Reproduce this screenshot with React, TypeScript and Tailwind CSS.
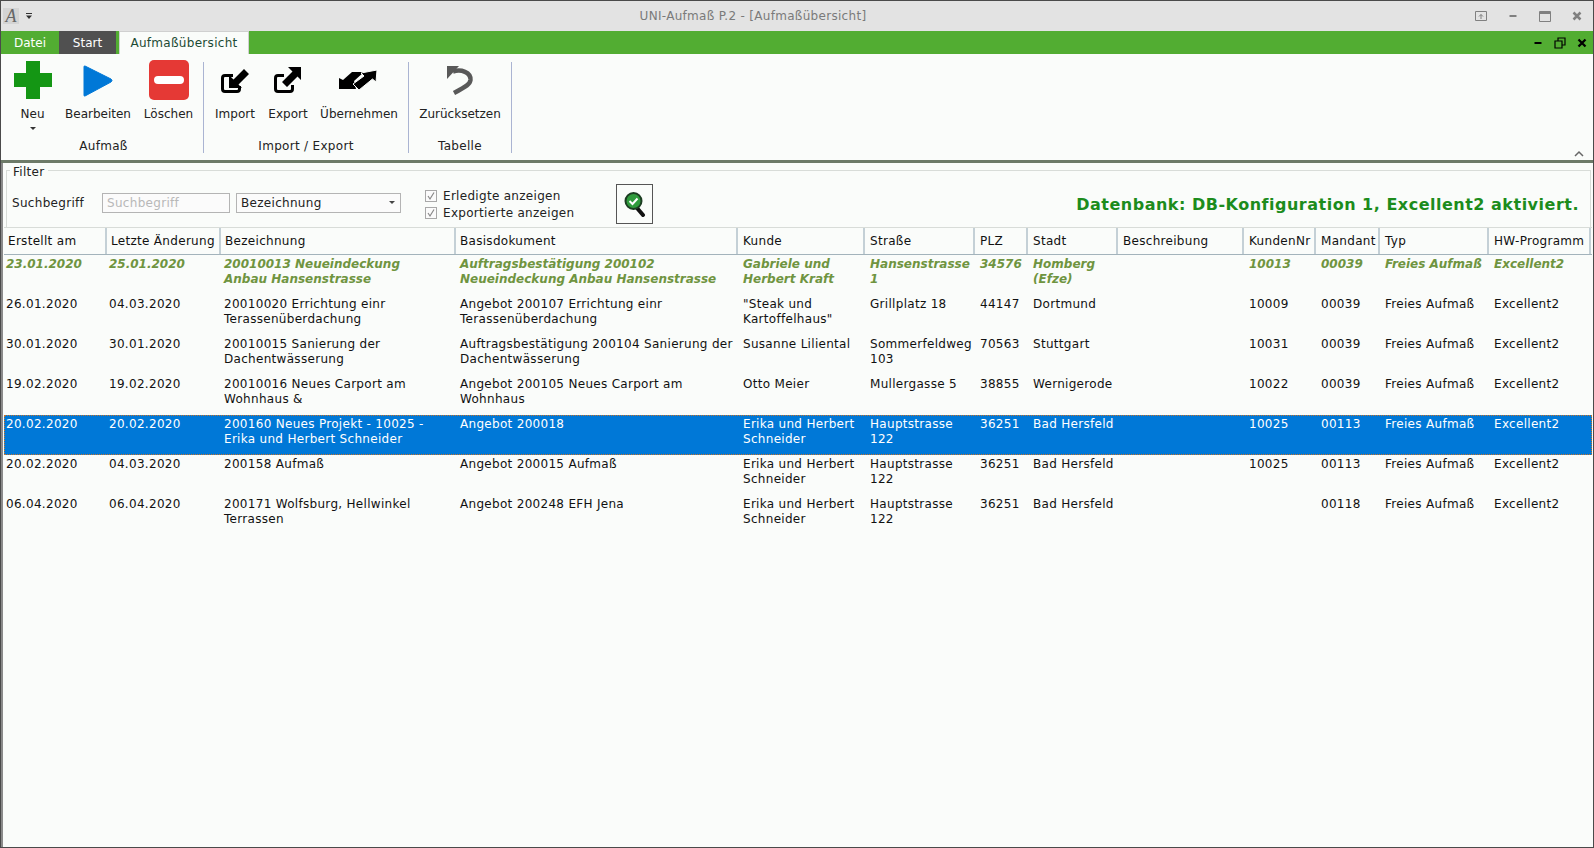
import React from 'react';

const colsClass =
  'grid w-[1588px] grid-cols-[103px_114px_235px_282px_127px_110px_53px_90px_126px_72px_64px_109px_102px]';

type Row = { cells: string[]; kind?: 'done' | 'selected' };

const headers = [
  'Erstellt am',
  'Letzte Änderung',
  'Bezeichnung',
  'Basisdokument',
  'Kunde',
  'Straße',
  'PLZ',
  'Stadt',
  'Beschreibung',
  'KundenNr',
  'Mandant',
  'Typ',
  'HW-Programm',
];

const rows: Row[] = [
  {
    kind: 'done',
    cells: [
      '23.01.2020',
      '25.01.2020',
      '20010013 Neueindeckung\nAnbau Hansenstrasse',
      'Auftragsbestätigung 200102\nNeueindeckung Anbau Hansenstrasse',
      'Gabriele und\nHerbert Kraft',
      'Hansenstrasse\n1',
      '34576',
      'Homberg\n(Efze)',
      '',
      '10013',
      '00039',
      'Freies Aufmaß',
      'Excellent2',
    ],
  },
  {
    cells: [
      '26.01.2020',
      '04.03.2020',
      '20010020 Errichtung einr\nTerassenüberdachung',
      'Angebot 200107 Errichtung einr\nTerassenüberdachung',
      '"Steak und\nKartoffelhaus"',
      'Grillplatz 18',
      '44147',
      'Dortmund',
      '',
      '10009',
      '00039',
      'Freies Aufmaß',
      'Excellent2',
    ],
  },
  {
    cells: [
      '30.01.2020',
      '30.01.2020',
      '20010015 Sanierung der\nDachentwässerung',
      'Auftragsbestätigung 200104 Sanierung der\nDachentwässerung',
      'Susanne Liliental',
      'Sommerfeldweg\n103',
      '70563',
      'Stuttgart',
      '',
      '10031',
      '00039',
      'Freies Aufmaß',
      'Excellent2',
    ],
  },
  {
    cells: [
      '19.02.2020',
      '19.02.2020',
      '20010016 Neues Carport am\nWohnhaus &',
      'Angebot 200105 Neues Carport am\nWohnhaus',
      'Otto Meier',
      'Mullergasse 5',
      '38855',
      'Wernigerode',
      '',
      '10022',
      '00039',
      'Freies Aufmaß',
      'Excellent2',
    ],
  },
  {
    kind: 'selected',
    cells: [
      '20.02.2020',
      '20.02.2020',
      '200160 Neues Projekt - 10025 -\nErika und Herbert Schneider',
      'Angebot 200018',
      'Erika und Herbert\nSchneider',
      'Hauptstrasse\n122',
      '36251',
      'Bad Hersfeld',
      '',
      '10025',
      '00113',
      'Freies Aufmaß',
      'Excellent2',
    ],
  },
  {
    cells: [
      '20.02.2020',
      '04.03.2020',
      '200158 Aufmaß',
      'Angebot 200015 Aufmaß',
      'Erika und Herbert\nSchneider',
      'Hauptstrasse\n122',
      '36251',
      'Bad Hersfeld',
      '',
      '10025',
      '00113',
      'Freies Aufmaß',
      'Excellent2',
    ],
  },
  {
    cells: [
      '06.04.2020',
      '06.04.2020',
      '200171 Wolfsburg, Hellwinkel\nTerrassen',
      'Angebot 200248 EFH Jena',
      'Erika und Herbert\nSchneider',
      'Hauptstrasse\n122',
      '36251',
      'Bad Hersfeld',
      '',
      '',
      '00118',
      'Freies Aufmaß',
      'Excellent2',
    ],
  },
];

function PlusIcon() {
  return (
    <svg width="38" height="38" viewBox="0 0 38 38">
      <path d="M12 0h14v12h12v14H26v12H12V26H0V12h12z" fill="#149614" />
    </svg>
  );
}

function PlayIcon() {
  return (
    <svg width="31" height="35" viewBox="0 0 31 35">
      <path d="M2 3 L28 16 Q30 17.500 28 19 L2 33 Q1 33.500 1 32 V4 Q1 2.500 2 3z" fill="#0078d7" stroke="#0078d7" strokeWidth="1" />
    </svg>
  );
}

function MinusIcon() {
  return (
    <svg width="40" height="40" viewBox="0 0 40 40">
      <rect width="40" height="40" rx="5" fill="#e53935" />
      <rect x="5" y="16" width="30" height="8" rx="4" fill="#fff" />
    </svg>
  );
}

function ImportIcon() {
  return (
    <svg width="30" height="28" viewBox="0 0 30 28">
      <path d="M13 9.500H5Q2.500 9.500 2.500 12V23Q2.500 25.500 5 25.500H17Q19.500 25.500 19.500 23V20" fill="none" stroke="#000" strokeWidth="3" />
      <path d="M9 22V9L13.500 13.500 24 3 29 8 18.500 18.500 22 22z" fill="#000" />
    </svg>
  );
}

function ExportIcon() {
  return (
    <svg width="30" height="28" viewBox="0 0 30 28">
      <path d="M11 9.500H5Q2.500 9.500 2.500 12V23Q2.500 25.500 5 25.500H17Q19.500 25.500 19.500 23V19" fill="none" stroke="#000" strokeWidth="3" />
      <path d="M28 1H15L19.500 5.500 9 16 14 21 24.500 10.500 28 14z" fill="#000" />
    </svg>
  );
}

function TakeOverIcon() {
  return (
    <svg width="40" height="22" viewBox="0 0 40 22">
      <path d="M0 20V9L4 11 13 3H25L15 12 17 20z" fill="#000" />
      <path d="M14 15 25 7 22 4 38 1 37 13 33.500 10 20 21z" fill="#000" stroke="#fafcfa" strokeWidth="1" />
    </svg>
  );
}

function UndoIcon() {
  return (
    <svg width="27" height="30" viewBox="0 0 27 30">
      <path d="M6 6.500C14 4 24 7 23.500 15 23 19 20 21 7 28" fill="none" stroke="#595959" strokeWidth="4.500" />
      <path d="M0 1H12L0 14z" fill="#595959" />
    </svg>
  );
}

function SearchIcon() {
  return (
    <svg width="22" height="26" viewBox="0 0 22 26">
      <path d="M13 17 19 24" stroke="#111" strokeWidth="4" strokeLinecap="round" />
      <circle cx="9.500" cy="10" r="8" fill="#2f9b3c" stroke="#1c3d22" strokeWidth="2" />
      <path d="M5.500 10 8.500 13 13.500 7.500" fill="none" stroke="#fff" strokeWidth="2" />
    </svg>
  );
}

function RibbonButton({
  label,
  width,
  icon,
  arrow,
}: {
  label: string;
  width: string;
  icon: React.ReactNode;
  arrow?: boolean;
}) {
  return (
    <div className={`flex flex-col items-center ${width}`}>
      <div className="flex h-[44px] items-center justify-center">{icon}</div>
      <div className="mt-[3px] h-[18px] whitespace-nowrap leading-[18px] text-[#222]">{label}</div>
      {arrow && <div className="mt-[4px] h-0 w-0 border-x-[3px] border-t-[3px] border-x-transparent border-t-[#333]" />}
    </div>
  );
}

function RibbonGroup({ title, width, children }: { title: string; width: string; children: React.ReactNode }) {
  return (
    <div className={`relative flex h-[91px] flex-col border-r border-[#aab4d2] ${width}`}>
      <div className="-mt-[4px] flex h-[86px]">{children}</div>
      <div className="text-center leading-[14px] tracking-[0.3px] text-[#222]">{title}</div>
    </div>
  );
}

function Check({ label }: { label: string }) {
  return (
    <div className="flex h-[17px] items-center gap-[6px]">
      <div className="flex h-[12px] w-[12px] items-center justify-center border border-[#a8a8a8] bg-[#fbfbfb]">
        <svg width="10" height="10" viewBox="0 0 10 10">
          <path d="M2 5 4 8 8 1.500" fill="none" stroke="#888" strokeWidth="1.200" />
        </svg>
      </div>
      <span className="text-[#222]">{label}</span>
    </div>
  );
}

export default function App() {
  return (
    <div className="flex h-[848px] w-[1594px] flex-col overflow-hidden border border-[#4a4a4a] bg-[#fafcfa] font-['DejaVu_Sans',sans-serif] text-[12px]">
      {/* title bar */}
      <div className="flex h-[30px] shrink-0 items-center bg-[#e3e3e3]">
        <div className="ml-[2px] flex h-[16px] w-[16px] items-center justify-center bg-[#d4d4d4] font-['Liberation_Serif',serif] text-[18px] italic leading-none text-[#666]">
          A
        </div>
        <svg className="ml-[6px]" width="8" height="8" viewBox="0 0 8 8">
          <path d="M1 1h6v1H1zM1 3.500h6L4 7z" fill="#333" />
        </svg>
        <div className="ml-[36px] flex-1 pr-[36px] text-center tracking-[0.3px] text-[#7a7a7a]">
          UNI-Aufmaß P.2 - [Aufmaßübersicht]
        </div>
        <div className="flex items-center gap-[16px] pr-[8px]">
          <svg width="16" height="16" viewBox="0 0 16 16">
            <path d="M2.500 3.500h11v9h-11z" fill="none" stroke="#808080" />
            <path d="M8 11V6.500M6 8.500 8 6.500 10 8.500" fill="none" stroke="#808080" />
          </svg>
          <svg width="16" height="16" viewBox="0 0 16 16">
            <path d="M4.500 7h7v2h-7z" fill="#808080" />
          </svg>
          <svg width="16" height="16" viewBox="0 0 16 16">
            <path d="M2.500 3.500h11v10h-11z" fill="none" stroke="#808080" />
            <path d="M3 4h10v2H3z" fill="#808080" />
          </svg>
          <svg width="16" height="16" viewBox="0 0 16 16">
            <path d="M4.500 4.500 11.500 11.500M11.500 4.500 4.500 11.500" stroke="#808080" strokeWidth="2.500" />
          </svg>
        </div>
      </div>

      {/* tabs */}
      <div className="flex h-[23px] shrink-0 items-stretch bg-[#52ad32]">
        <div className="flex w-[58px] items-center justify-center text-white">Datei</div>
        <div className="flex w-[57px] items-center justify-center bg-[#505050] text-white">Start</div>
        <div className="ml-[3px] flex w-[130px] items-center justify-center border-x border-t border-[#d0d0d0] bg-[#fafcfa] tracking-[0.3px] text-[#1c4a34]">
          Aufmaßübersicht
        </div>
        <div className="ml-auto flex items-center gap-[10px] pr-[5px]">
          <svg width="12" height="12" viewBox="0 0 12 12">
            <path d="M2.500 5h7v2h-7z" fill="#000" />
          </svg>
          <svg width="12" height="12" viewBox="0 0 12 12">
            <path d="M1 4h7v7H1zM4 4V1h7v7H8" fill="none" stroke="#000" strokeWidth="1.200" />
          </svg>
          <svg width="12" height="12" viewBox="0 0 12 12">
            <path d="M2.500 2.500 9.500 9.500M9.500 2.500 2.500 9.500" stroke="#000" strokeWidth="2.300" />
          </svg>
        </div>
      </div>

      {/* ribbon */}
      <div className="relative h-[109px] shrink-0 border-b-[3px] border-[#6d7a68] pt-[8px] pl-[3px]">
        <div className="flex">
          <RibbonGroup title="Aufmaß" width="w-[200px]">
            <RibbonButton label="Neu" width="w-[57px]" icon={<PlusIcon />} arrow />
            <RibbonButton label="Bearbeiten" width="w-[74px]" icon={<PlayIcon />} />
            <RibbonButton label="Löschen" width="w-[67px]" icon={<MinusIcon />} />
          </RibbonGroup>
          <RibbonGroup title="Import / Export" width="w-[205px]">
            <RibbonButton label="Import" width="w-[62px]" icon={<ImportIcon />} />
            <RibbonButton label="Export" width="w-[44px]" icon={<ExportIcon />} />
            <RibbonButton label="Übernehmen" width="w-[98px]" icon={<TakeOverIcon />} />
          </RibbonGroup>
          <RibbonGroup title="Tabelle" width="w-[103px]">
            <RibbonButton label="Zurücksetzen" width="w-[102px]" icon={<UndoIcon />} />
          </RibbonGroup>
        </div>
        <svg className="absolute right-[9px] bottom-[2px]" width="10" height="8" viewBox="0 0 10 8">
          <path d="M1 6 5 2 9 6" fill="none" stroke="#666" strokeWidth="1.500" />
        </svg>
      </div>

      {/* content */}
      <div className="flex min-h-0 flex-1 flex-col border-l-2 border-[#8a8a8a] tracking-[0.3px]">
        {/* filter */}
        <div className="relative mt-[7px] mr-[2px] ml-[3px] flex h-[57px] shrink-0 items-center border-x border-t border-[#d8dcd8] pt-[7px] pl-[5px]">
          <span className="absolute top-[-8px] left-[3px] bg-[#fafcfa] px-[3px] text-[#222]">Filter</span>
          <span className="w-[90px] text-[#222]">Suchbegriff</span>
          <div className="flex h-[20px] w-[128px] items-center border border-[#b4b4b4] bg-[#fbfbfb] px-[4px] text-[#b8b8b8]">
            Suchbegriff
          </div>
          <div className="ml-[6px] flex h-[20px] w-[165px] items-center justify-between border border-[#b4b4b4] bg-[#fbfbfb] px-[4px] text-[#222]">
            Bezeichnung
            <span className="mr-[1px] h-0 w-0 border-x-[3px] border-t-[3px] border-x-transparent border-t-[#444]" />
          </div>
          <div className="mt-[4px] ml-[24px] flex flex-col">
            <Check label="Erledigte anzeigen" />
            <Check label="Exportierte anzeigen" />
          </div>
          <div className="mt-[2px] ml-[42px] flex h-[40px] w-[37px] items-center justify-center border border-[#555]">
            <SearchIcon />
          </div>
          <div className="mt-[4px] ml-auto pr-[11px] text-[16px] font-bold tracking-[0.5px] text-[#1c8c1c]">
            Datenbank: DB-Konfiguration 1, Excellent2 aktiviert.
          </div>
        </div>

        {/* table header */}
        <div className={`${colsClass} ml-[1px] h-[28px] shrink-0 border-y border-t-[#d8dcd8] border-b-[#a3b3bb]`}>
          {headers.map((h) => (
            <div
              key={h}
              className="flex items-center overflow-hidden border-r-2 border-[#c4d0d6] pl-[4px] whitespace-nowrap text-[#111] nth-[n+5]:pl-[5px]"
            >
              {h}
            </div>
          ))}
        </div>

        {/* table rows */}
        <div className="ml-[1px]">
          {rows.map((row, i) => (
            <div
              key={i}
              className={
                colsClass +
                ' h-[40px] overflow-hidden ' +
                (row.kind === 'selected'
                  ? 'border border-dotted border-[#c8742a] bg-[#0078d7] text-white'
                  : row.kind === 'done'
                    ? 'border border-transparent font-bold tracking-normal text-[#6f9440] italic'
                    : 'border border-transparent text-[#111]')
              }
            >
              {row.cells.map((c, j) => (
                <div
                  key={j}
                  className="overflow-hidden pt-[1px] pl-[3px] leading-[15px] whitespace-pre nth-[-n+2]:pl-[1px] nth-3:pl-[2px] nth-[n+5]:pl-[4px]"
                >
                  {c}
                </div>
              ))}
            </div>
          ))}
        </div>
      </div>
    </div>
  );
}
